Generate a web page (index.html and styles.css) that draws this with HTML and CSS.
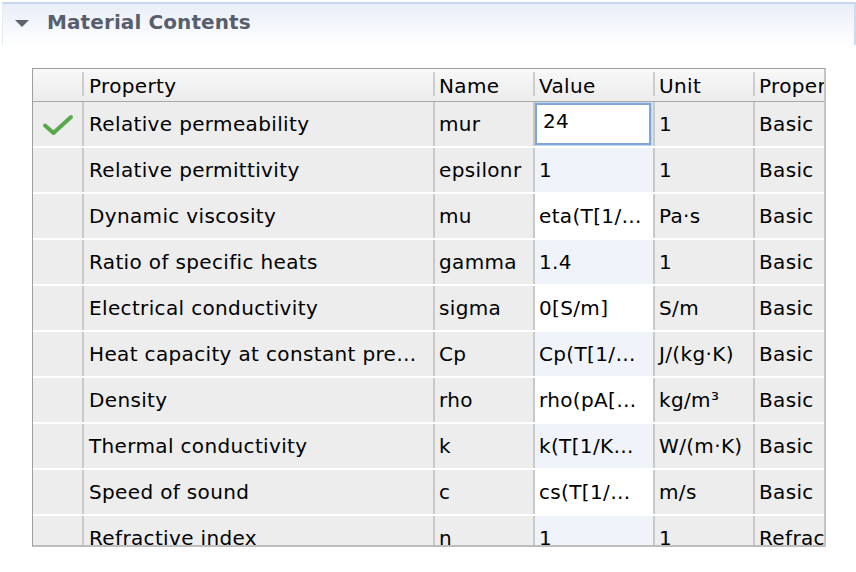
FILE: index.html
```html
<!DOCTYPE html>
<html>
<head>
<meta charset="utf-8">
<link rel="stylesheet" href="styles.css">
</head>
<body>
<div class="section">
  <span class="tri"></span>
  <span class="title">Material Contents</span>
</div>
<div class="tablewrap">
  <div class="table">
    <div class="row head">
      <div class="c chk"></div>
      <div class="c prop">Property</div>
      <div class="c name">Name</div>
      <div class="c val">Value</div>
      <div class="c unit">Unit</div>
      <div class="c cat">Property group</div>
    </div>
    <div class="row odd">
      <div class="c chk"><svg width="32" height="22" viewBox="0 0 32 22"><path d="M3 11.5 L11.5 19 L29 3" fill="none" stroke="#58a94a" stroke-width="4" stroke-linecap="round" stroke-linejoin="round"/></svg></div>
      <div class="c prop">Relative permeability</div>
      <div class="c name">mur</div>
      <div class="c val edit"><span class="box">24</span></div>
      <div class="c unit">1</div>
      <div class="c cat">Basic</div>
    </div>
    <div class="row odd">
      <div class="c chk"></div>
      <div class="c prop">Relative permittivity</div>
      <div class="c name">epsilonr</div>
      <div class="c val">1</div>
      <div class="c unit">1</div>
      <div class="c cat">Basic</div>
    </div>
    <div class="row even">
      <div class="c chk"></div>
      <div class="c prop">Dynamic viscosity</div>
      <div class="c name">mu</div>
      <div class="c val">eta(T[1/…</div>
      <div class="c unit">Pa·s</div>
      <div class="c cat">Basic</div>
    </div>
    <div class="row odd">
      <div class="c chk"></div>
      <div class="c prop">Ratio of specific heats</div>
      <div class="c name">gamma</div>
      <div class="c val">1.4</div>
      <div class="c unit">1</div>
      <div class="c cat">Basic</div>
    </div>
    <div class="row even">
      <div class="c chk"></div>
      <div class="c prop">Electrical conductivity</div>
      <div class="c name">sigma</div>
      <div class="c val">0[S/m]</div>
      <div class="c unit">S/m</div>
      <div class="c cat">Basic</div>
    </div>
    <div class="row odd">
      <div class="c chk"></div>
      <div class="c prop">Heat capacity at constant pre…</div>
      <div class="c name">Cp</div>
      <div class="c val">Cp(T[1/…</div>
      <div class="c unit">J/(kg·K)</div>
      <div class="c cat">Basic</div>
    </div>
    <div class="row even">
      <div class="c chk"></div>
      <div class="c prop">Density</div>
      <div class="c name">rho</div>
      <div class="c val">rho(pA[…</div>
      <div class="c unit">kg/m³</div>
      <div class="c cat">Basic</div>
    </div>
    <div class="row odd">
      <div class="c chk"></div>
      <div class="c prop">Thermal conductivity</div>
      <div class="c name">k</div>
      <div class="c val">k(T[1/K…</div>
      <div class="c unit">W/(m·K)</div>
      <div class="c cat">Basic</div>
    </div>
    <div class="row even">
      <div class="c chk"></div>
      <div class="c prop">Speed of sound</div>
      <div class="c name">c</div>
      <div class="c val">cs(T[1/…</div>
      <div class="c unit">m/s</div>
      <div class="c cat">Basic</div>
    </div>
    <div class="row odd">
      <div class="c chk"></div>
      <div class="c prop">Refractive index</div>
      <div class="c name">n</div>
      <div class="c val">1</div>
      <div class="c unit">1</div>
      <div class="c cat">Refractive index</div>
    </div>
  </div>
</div>
</body>
</html>
```
FILE: styles.css
```css
html, body {
  margin: 0;
  padding: 0;
  background: #ffffff;
}
body {
  width: 856px;
  height: 572px;
  overflow: hidden;
  font-family: "DejaVu Sans", "Liberation Sans", sans-serif;
  color: #000;
}
.section {
  margin: 2px 0 0 2px;
  height: 43px;
  border-top: 2px solid #c7d6ec;
  border-left: 1px solid #e6ecf5;
  border-right: 2px solid #cddbef;
  background: linear-gradient(#e8eef8, #f6f8fc 60%, #ffffff);
  display: flex;
  align-items: center;
  padding-left: 12px;
  box-sizing: border-box;
}
.tri {
  width: 0;
  height: 0;
  border-left: 7px solid transparent;
  border-right: 7px solid transparent;
  border-top: 7px solid #5b6272;
  margin-right: 18px;
  margin-top: -2px;
}
.title {
  font-weight: bold;
  font-size: 20px;
  letter-spacing: 0.1px;
  color: #575e6d;
  margin-top: -6px;
}
.tablewrap {
  margin: 23px 0 0 32px;
  width: 794px;
  height: 479px;
  border: 1px solid #9e9e9e;
  border-bottom: 2px solid #bdbdbd;
  border-right: 2px solid #c4c4c4;
  box-sizing: border-box;
  overflow: hidden;
  background: #ededed;
}
.row {
  display: grid;
  grid-template-columns: 51px 351px 100px 120px 100px 69px;
  height: 46px;
  box-sizing: border-box;
  border-bottom: 2px solid #ffffff;
}
.row.head {
  height: 33px;
  border-bottom: 1px solid #a8a8a8;
  background: linear-gradient(#f8f8f8, #ececec);
}
.c {
  font-size: 20px;
  letter-spacing: 0.35px;
  padding-left: 4px;
  white-space: nowrap;
  overflow: hidden;
  display: flex;
  align-items: center;
  border-right: 2px solid #c9c9c9;
  position: relative;
}
.c.prop {
  padding-left: 5px;
}
.c.cat {
  border-right: none;
}
.head .c {
  border-right: none;
  padding-top: 1px;
}
.head .c::after {
  content: "";
  position: absolute;
  right: 0;
  top: 3px;
  bottom: 5px;
  width: 2px;
  background: #cdcdcd;
}
.head .c.cat::after {
  display: none;
}
.c.chk {
  justify-content: center;
  padding-left: 0;
}
.c.chk svg {
  margin-left: 1px;
  margin-top: 2px;
}
.row.odd .val { background: #f0f4fa; }
.row.even .val { background: #ffffff; }
.val.edit {
  padding: 1px 2px 1px 0;
}
.box {
  flex: 1;
  align-self: stretch;
  background: #ffffff;
  border: 2px solid #7ea7d8;
  box-shadow: 0 0 2px 1px #aac6e8;
  padding-left: 6px;
  padding-bottom: 6px;
  display: flex;
  align-items: center;
}
```
